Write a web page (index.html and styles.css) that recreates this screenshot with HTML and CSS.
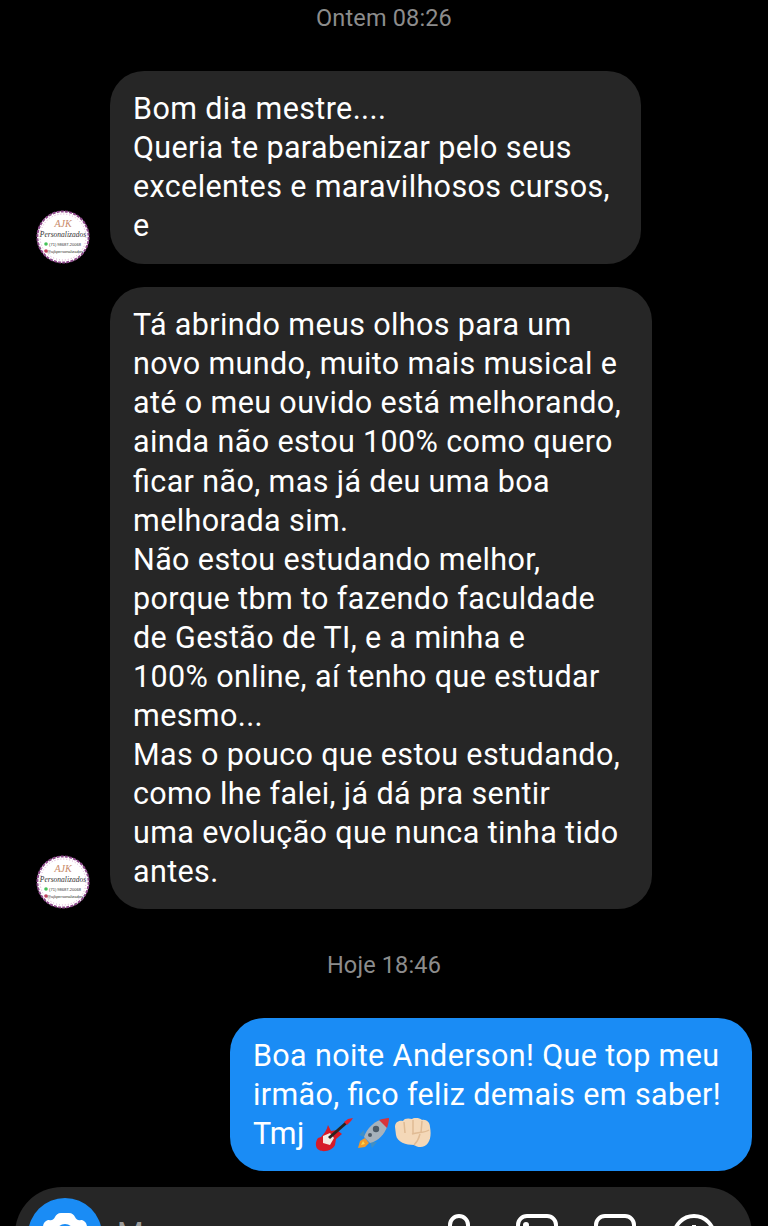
FILE: index.html
```html
<!DOCTYPE html>
<html>
<head>
    <meta charset="utf-8">
    <title>Mensagens</title>
    <link rel="stylesheet" href="styles.css">
</head>
<body>
    <main class="chat">
        <div class="time time-first">Ontem 08:26</div>

        <div class="row row-first">
            <svg class="avatar" viewBox="0 0 54 54">
                <circle cx="27" cy="27" r="26" fill="#fff"/>
                <circle cx="27" cy="27" r="25.6" class="av-ring"/>
                <circle cx="27" cy="27" r="23" class="av-dots"/>
                <text x="27" y="17" text-anchor="middle" class="av-logo">AJK</text>
                <text x="27" y="27" text-anchor="middle" class="av-name">Personalizados</text>
                <circle cx="10" cy="34" r="1.8" fill="#46c35a"/>
                <text x="29" y="36" text-anchor="middle" class="av-small">(71) 98687-20068</text>
                <circle cx="10" cy="41" r="1.8" fill="#c2415f"/>
                <text x="29" y="43" text-anchor="middle" class="av-small">@ajkpersonalizados</text>
            </svg>
            <div class="bubble bubble-short">Bom dia mestre....<br>Queria te parabenizar pelo seus<br>excelentes e maravilhosos cursos,<br>e</div>
        </div>

        <div class="row row-second">
            <svg class="avatar" viewBox="0 0 54 54">
                <circle cx="27" cy="27" r="26" fill="#fff"/>
                <circle cx="27" cy="27" r="25.6" class="av-ring"/>
                <circle cx="27" cy="27" r="23" class="av-dots"/>
                <text x="27" y="17" text-anchor="middle" class="av-logo">AJK</text>
                <text x="27" y="27" text-anchor="middle" class="av-name">Personalizados</text>
                <circle cx="10" cy="34" r="1.8" fill="#46c35a"/>
                <text x="29" y="36" text-anchor="middle" class="av-small">(71) 98687-20068</text>
                <circle cx="10" cy="41" r="1.8" fill="#c2415f"/>
                <text x="29" y="43" text-anchor="middle" class="av-small">@ajkpersonalizados</text>
            </svg>
            <div class="bubble">Tá abrindo meus olhos para um<br>novo mundo, muito mais musical e<br>até o meu ouvido está melhorando,<br>ainda não estou 100% como quero<br>ficar não, mas já deu uma boa<br>melhorada sim.<br>Não estou estudando melhor,<br>porque tbm to fazendo faculdade<br>de Gestão de TI, e a minha e<br>100% online, aí tenho que estudar<br>mesmo...<br>Mas o pouco que estou estudando,<br>como lhe falei, já dá pra sentir<br>uma evolução que nunca tinha tido<br>antes.</div>
        </div>

        <div class="time time-second">Hoje 18:46</div>

        <div class="row row-mine">
            <div class="bubble bubble-mine">Boa noite Anderson! Que top meu<br>irmão, fico feliz demais em saber!<br>Tmj<span class="emojis">
                    <svg class="emoji" width="38" height="34" viewBox="0 0 38 34">
                        <path d="M13 7 L16 13 L22 12 L27 16 L21 21 L20 27 C18 32 9 35 4 32 C0 30 0 24 3 20 L6 19 C9 16 12 12 13 7 Z" fill="#d61c28"/>
                        <path d="M8 18 L15 15 L19 20 L15 27 L8 25 Z" fill="#f3ece4"/>
                        <path d="M14 20 L31 5" stroke="#2a2320" stroke-width="3"/>
                        <path d="M29 4 L33 1 L38 0 L36 3 L32 7 Z" fill="#e0202e"/>
                    </svg>
                    <svg class="emoji" width="32" height="31" viewBox="0 0 32 31">
                        <path d="M8 20 L3 23 L1 30 L8 29 L12 25 Z" fill="#f09a2c"/>
                        <path d="M6 23 L4 27 L8 26 Z" fill="#f8d84e"/>
                        <path d="M7 12 L2 17 L8 19 Z M20 24 L15 30 L13 24 Z" fill="#3f8fc6"/>
                        <path d="M7 19 C10 10 17 4 23 2 L30 9 C28 15 22 23 13 25 Z" fill="#a7b2bb"/>
                        <path d="M22 2 C25 1 29 0 32 0 C32 3 31 7 30 10 Z" fill="#d8343a"/>
                        <circle cx="19" cy="11" r="3.2" fill="#4c5a66"/>
                        <circle cx="13" cy="17" r="2" fill="#4c5a66"/>
                    </svg>
                    <svg class="emoji emoji-fist" width="36" height="30" viewBox="0 0 36 30">
                        <path d="M0 9 C0 4 4 2 8 3 C9 0 14 0 17 1 C20 -1 25 0 27 2 C31 1 35 4 35 9 C36 14 36 21 33 25 C30 30 23 30 19 27 C11 27 2 24 1 17 Z" fill="#f4d8b8"/>
                        <path d="M9 4 L10 15 M18 2 L18 15 M27 3 L26 15" stroke="#e0bb94" stroke-width="1.5" fill="none"/>
                        <path d="M17 16 C23 14 30 15 34 12 M19 27 C22 24 24 20 25 16" stroke="#e0bb94" stroke-width="1.4" fill="none"/>
                    </svg>
                </span>
            </div>
        </div>

        <div class="composer">
            <div class="camera">
                <svg width="44" height="40" viewBox="0 0 44 40">
                    <path d="M6 7 C9 8 11 6 12 4 C13 2 15 0 18 0 H26 C29 0 31 2 32 4 C33 6 35 8 38 7 C41 7 44 10 44 14 V40 H0 V14 C0 10 3 7 6 7 Z" fill="#fff"/>
                    <circle cx="22" cy="20" r="9" fill="#1a8cf5"/>
                </svg>
            </div>
            <span class="placeholder">Mensagem...</span>
            <div class="tools">
                <svg class="tool-mic" width="22" height="40" viewBox="0 0 22 40">
                    <rect x="2" y="2" width="18" height="44" rx="9" class="tool-line"/>
                </svg>
                <svg width="42" height="40" viewBox="0 0 42 40">
                    <rect x="2" y="2" width="38" height="44" rx="9" class="tool-line"/>
                    <circle cx="10" cy="11" r="3" fill="#fff"/>
                </svg>
                <svg width="42" height="40" viewBox="0 0 42 40">
                    <rect x="2" y="2" width="38" height="44" rx="9" class="tool-line"/>
                </svg>
                <svg class="tool-plus" width="44" height="40" viewBox="0 0 44 40">
                    <circle cx="22" cy="24" r="20" class="tool-line"/>
                    <path d="M22 13 V35 M11 24 H33" class="tool-line"/>
                </svg>
            </div>
        </div>
    </main>
</body>
</html>
```

FILE: styles.css
```css
html, body {
    margin: 0;
    height: 100%;
    background-color: #000;
    overflow: hidden;
}
.chat {
    display: flex;
    flex-direction: column;
    height: 1226px;
    overflow: hidden;
    font-family: Roboto, "Noto Sans", sans-serif;
    color: #fff;
}
.time {
    text-align: center;
    font-size: 23.5px;
    line-height: 26px;
    letter-spacing: 0.15px;
    color: #8c8c8c;
}
.time-first {
    margin-top: 5px;
}
.time-second {
    margin-top: 43px;
}
.row {
    display: flex;
    align-items: flex-end;
    padding-left: 36px;
}
.row-first {
    margin-top: 40px;
}
.row-second {
    margin-top: 23px;
}
.row-mine {
    justify-content: flex-end;
    padding-right: 16px;
    margin-top: 40px;
}
.avatar {
    width: 54px;
    height: 54px;
    flex: none;
    margin-right: 20px;
}
.av-ring {
    fill: none;
    stroke: #8e4a8c;
    stroke-width: 2;
    stroke-dasharray: 3 1.2;
}
.av-dots {
    fill: none;
    stroke: #d9a3cf;
    stroke-width: 1;
    stroke-dasharray: 1 2;
}
.av-logo {
    font-family: "Liberation Serif", serif;
    font-size: 10px;
    font-style: italic;
    fill: #c98a6a;
}
.av-name {
    font-family: "Liberation Serif", serif;
    font-size: 7.5px;
    font-style: italic;
    fill: #333;
}
.av-small {
    font-family: "Liberation Sans", sans-serif;
    font-size: 4px;
    fill: #333;
}
.bubble {
    background-color: #262626;
    border-radius: 34px;
    padding: 18px 31px 18px 23px;
    font-size: 30.5px;
    line-height: 39.07px;
    letter-spacing: 0.38px;
    font-feature-settings: "liga" 1;
    white-space: nowrap;
}
.bubble-short {
    padding-bottom: 19px;
}
.bubble-mine {
    background-color: #1a8cf5;
}
.emojis {
    display: inline-flex;
    align-items: flex-start;
    gap: 4px;
    margin-left: 10px;
    vertical-align: -8px;
}
.emoji-fist {
    margin-left: 2px;
}
.composer {
    display: flex;
    flex: none;
    align-items: flex-start;
    height: 90px;
    margin: 16px 16px 0 15px;
    padding: 11px 13px 0;
    background-color: #262626;
    border-radius: 47px;
}
.camera {
    display: flex;
    justify-content: center;
    width: 74px;
    height: 74px;
    padding-top: 15px;
    box-sizing: border-box;
    flex: none;
    background-color: #1a8cf5;
    border-radius: 50%;
}
.placeholder {
    margin: 16px 0 0 15px;
    font-size: 30.5px;
    line-height: 39px;
    color: #9a9a9a;
}
.tools {
    display: flex;
    gap: 36px;
    margin-left: auto;
    margin-right: 23px;
    padding-top: 16px;
}
.tool-mic {
    margin-right: 10px;
}
.tool-plus {
    margin-top: -2px;
}
.tool-line {
    fill: none;
    stroke: #fff;
    stroke-width: 4;
}
```
